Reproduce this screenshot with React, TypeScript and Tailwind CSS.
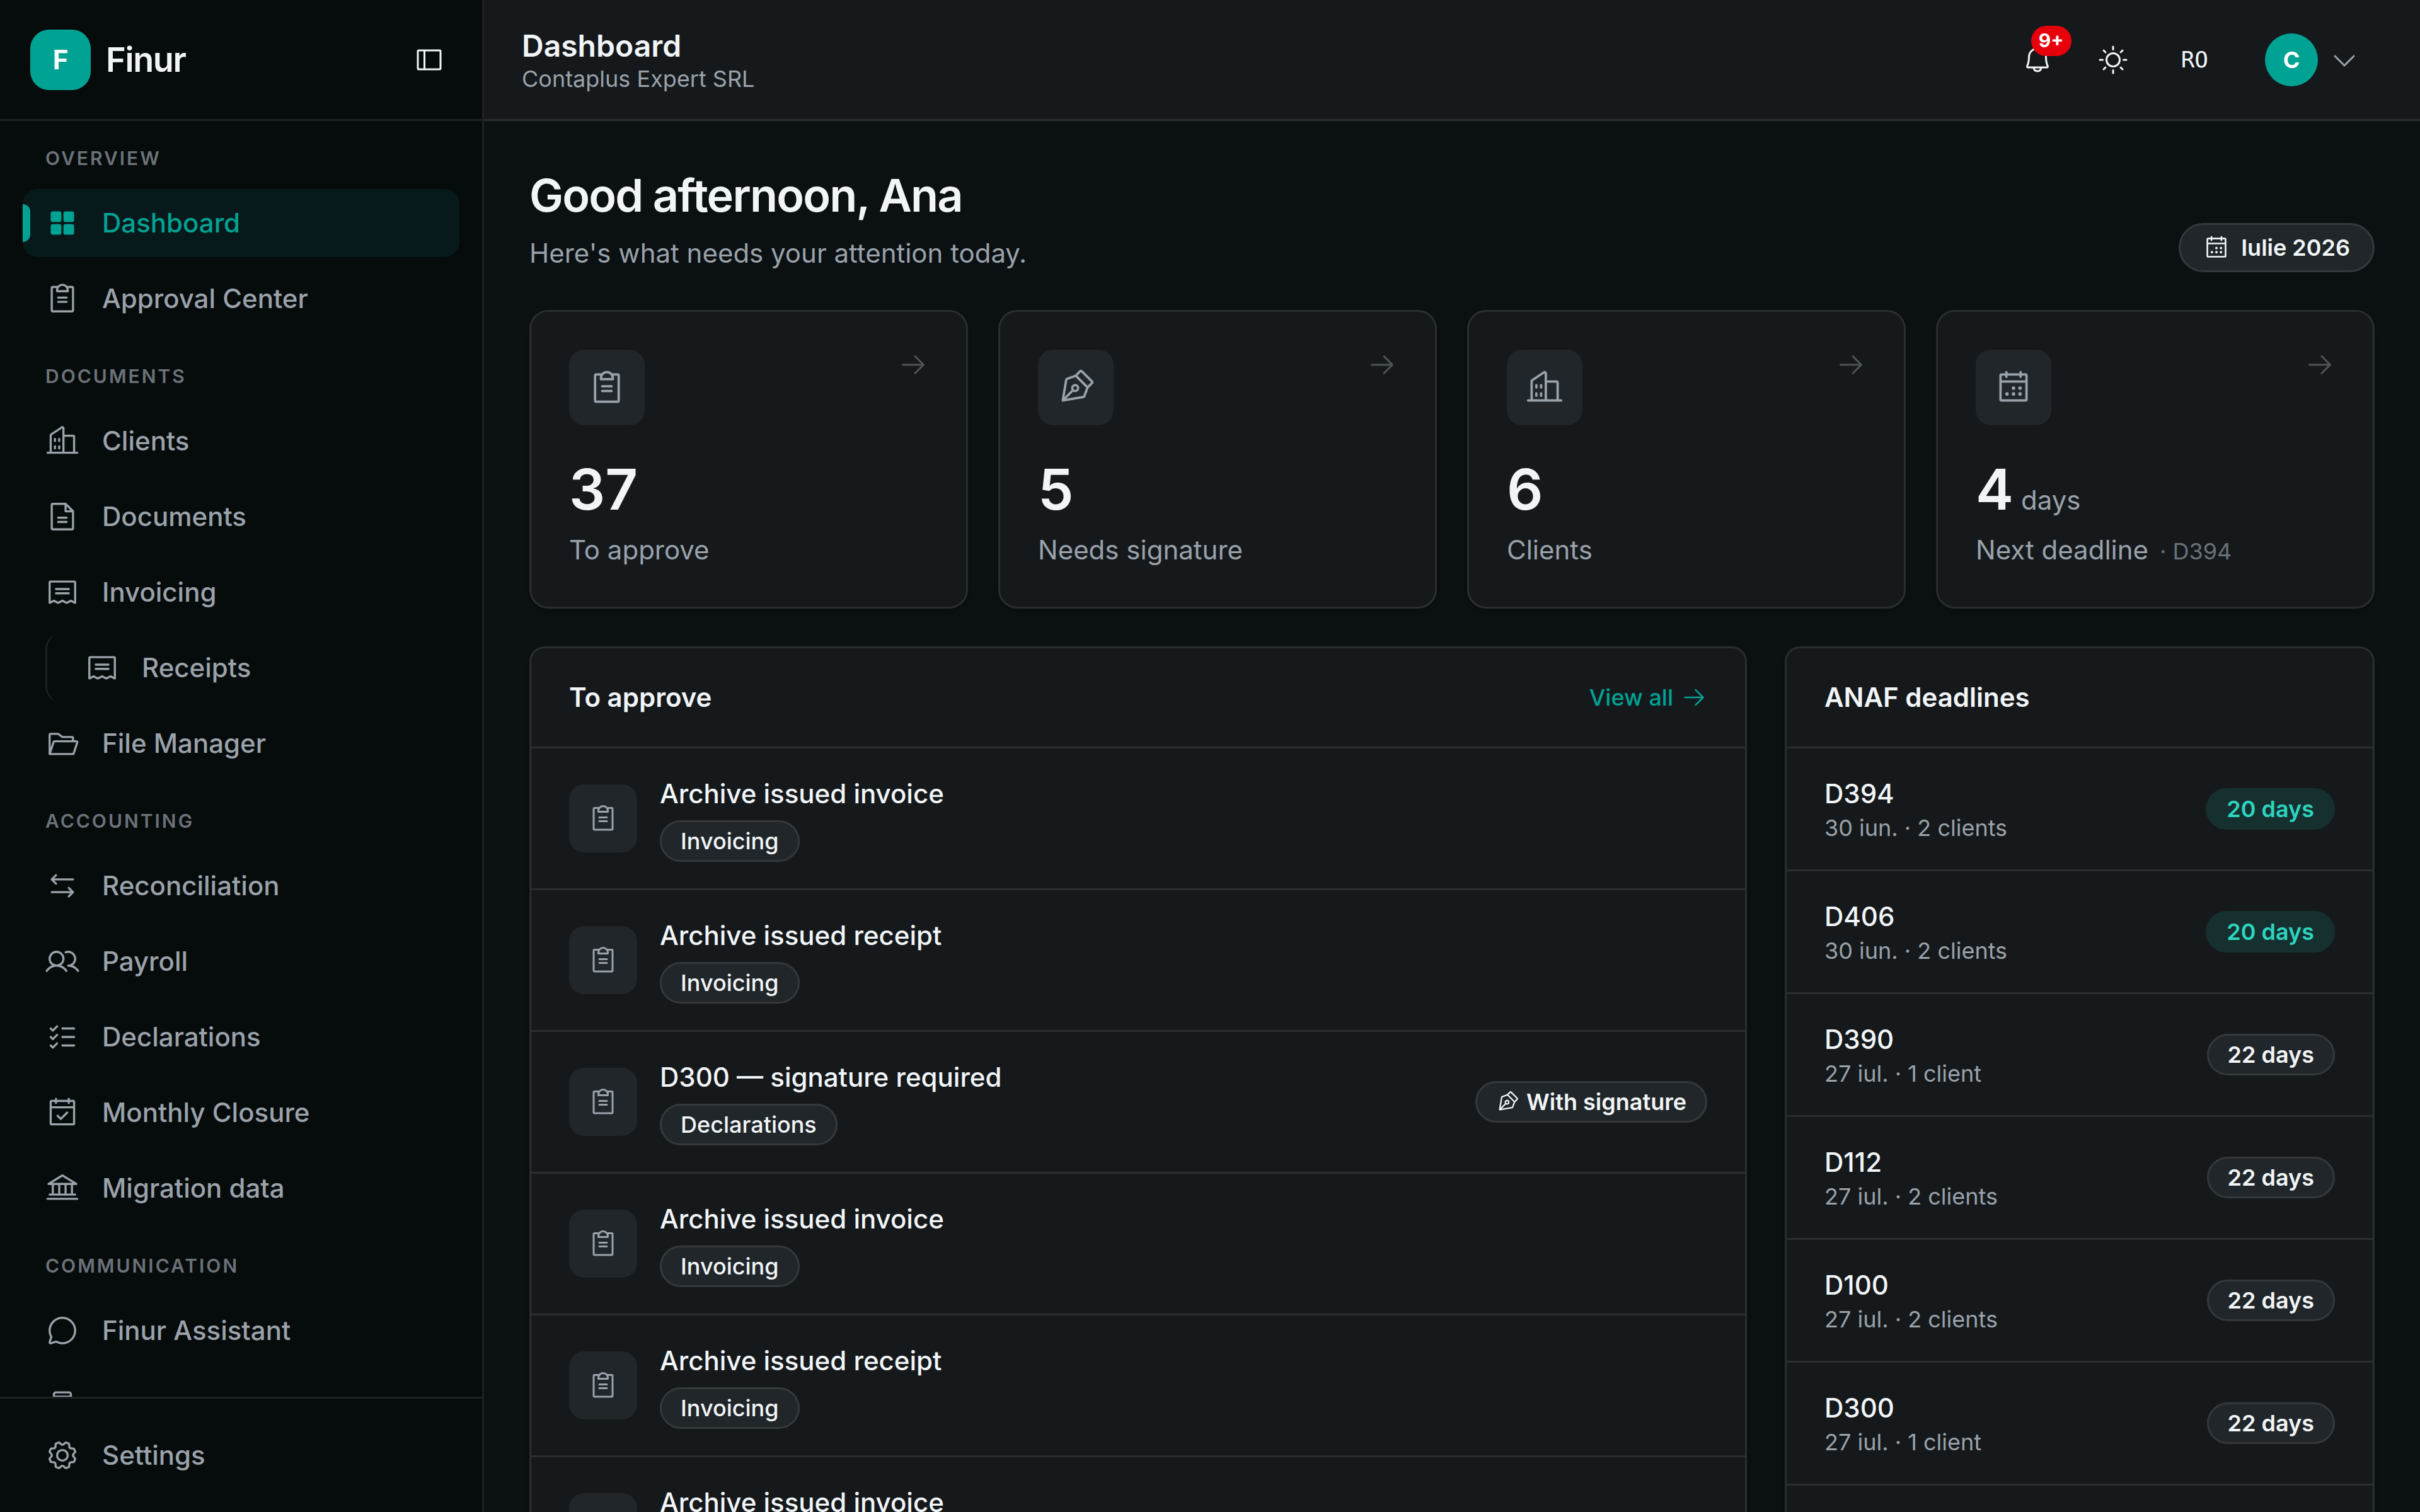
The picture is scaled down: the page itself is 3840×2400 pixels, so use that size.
import { ReactNode } from 'react';
import type { IconType } from 'react-icons';
import {
  PiArrowRight,
  PiArrowsLeftRight,
  PiBank,
  PiBell,
  PiBuildings,
  PiCalendarCheck,
  PiCalendarDots,
  PiCaretDown,
  PiChatCircle,
  PiClipboardText,
  PiDeviceMobile,
  PiFileText,
  PiFolderOpen,
  PiGear,
  PiListChecks,
  PiPenNib,
  PiReceipt,
  PiSidebarSimple,
  PiSquaresFourFill,
  PiSun,
  PiUsers,
} from 'react-icons/pi';
import clsx from 'clsx';

interface NavEntry {
  label: string;
  icon: IconType;
  active?: boolean;
  nested?: boolean;
  iconOnly?: boolean;
}

interface NavSection {
  title: string;
  items: NavEntry[];
}

const NAV: NavSection[] = [
  {
    title: 'OVERVIEW',
    items: [
      { label: 'Dashboard', icon: PiSquaresFourFill, active: true },
      { label: 'Approval Center', icon: PiClipboardText },
    ],
  },
  {
    title: 'DOCUMENTS',
    items: [
      { label: 'Clients', icon: PiBuildings },
      { label: 'Documents', icon: PiFileText },
      { label: 'Invoicing', icon: PiReceipt },
      { label: 'Receipts', icon: PiReceipt, nested: true },
      { label: 'File Manager', icon: PiFolderOpen },
    ],
  },
  {
    title: 'ACCOUNTING',
    items: [
      { label: 'Reconciliation', icon: PiArrowsLeftRight },
      { label: 'Payroll', icon: PiUsers },
      { label: 'Declarations', icon: PiListChecks },
      { label: 'Monthly Closure', icon: PiCalendarCheck },
      { label: 'Migration data', icon: PiBank },
    ],
  },
  {
    title: 'COMMUNICATION',
    items: [
      { label: 'Finur Assistant', icon: PiChatCircle },
      { label: 'Mobile', icon: PiDeviceMobile, iconOnly: true },
    ],
  },
];

const STATS = [
  { value: '37', label: 'To approve', icon: PiClipboardText },
  { value: '5', label: 'Needs signature', icon: PiPenNib },
  { value: '6', label: 'Clients', icon: PiBuildings },
  { value: '4', unit: 'days', label: 'Next deadline', hint: '· D394', icon: PiCalendarDots },
];

const APPROVALS = [
  { id: 1, title: 'Archive issued invoice', tag: 'Invoicing' },
  { id: 2, title: 'Archive issued receipt', tag: 'Invoicing' },
  { id: 3, title: 'D300 — signature required', tag: 'Declarations', signature: true },
  { id: 4, title: 'Archive issued invoice', tag: 'Invoicing' },
  { id: 5, title: 'Archive issued receipt', tag: 'Invoicing' },
  { id: 6, title: 'Archive issued invoice', tag: 'Invoicing' },
];

const DEADLINES = [
  { code: 'D394', detail: '30 iun. · 2 clients', left: '20 days', accent: true },
  { code: 'D406', detail: '30 iun. · 2 clients', left: '20 days', accent: true },
  { code: 'D390', detail: '27 iul. · 1 client', left: '22 days' },
  { code: 'D112', detail: '27 iul. · 2 clients', left: '22 days' },
  { code: 'D100', detail: '27 iul. · 2 clients', left: '22 days' },
  { code: 'D300', detail: '27 iul. · 1 client', left: '22 days' },
  { code: 'D301', detail: '27 iul. · 1 client', left: '22 days' },
];

function NavItem({ label, icon: Icon, active, nested, iconOnly }: NavEntry) {
  return (
    <a
      href="#"
      aria-label={iconOnly ? label : undefined}
      aria-current={active ? 'page' : undefined}
      className={clsx(
        'relative flex h-[108px] shrink-0 items-center gap-9 rounded-3xl text-[42px] leading-[60px] font-medium',
        active ? 'bg-[#08191b] text-[#00a294]' : 'text-[#9aa2aa]',
        nested ? 'ml-9 border-l-3 border-[#1d2122] pr-9 pl-[60px]' : 'px-9',
      )}
    >
      {active && <span className="absolute top-6 left-0 h-[60px] w-3 rounded-r-full bg-[#00a294]" />}
      <Icon className="size-[54px] shrink-0" />
      {!iconOnly && <span>{label}</span>}
    </a>
  );
}

function Sidebar() {
  return (
    <aside className="flex w-[768px] shrink-0 flex-col border-r-3 border-[#1d2122] bg-[#060b0c]">
      <div className="flex h-48 shrink-0 items-center gap-6 border-b-3 border-[#1d2122] px-12">
        <div className="flex size-24 items-center justify-center rounded-[30px] bg-[#00a294] text-[42px] font-bold text-white">
          F
        </div>
        <span className="flex-1 text-[54px] font-semibold tracking-tight text-[#f1f5f7]">Finur</span>
        <button type="button" aria-label="Toggle sidebar" className="flex size-[72px] items-center justify-center text-[#f1f5f7]">
          <PiSidebarSimple className="size-12" />
        </button>
      </div>

      <nav className="flex min-h-0 flex-1 flex-col gap-[47px] overflow-hidden px-9 pt-[37px]">
        {NAV.map((section) => (
          <div key={section.title} className="shrink-0">
            <h2 className="mb-[27px] px-9 text-[30px] leading-[44px] font-semibold tracking-widest text-[#6b7279]">
              {section.title}
            </h2>
            <div className="flex flex-col gap-3">
              {section.items.map((item) => (
                <NavItem key={item.label} {...item} />
              ))}
            </div>
          </div>
        ))}
      </nav>

      <div className="shrink-0 border-t-3 border-[#1d2122] p-9">
        <NavItem label="Settings" icon={PiGear} />
      </div>
    </aside>
  );
}

function Topbar() {
  return (
    <header className="flex h-48 shrink-0 items-center justify-between border-b-3 border-[#2a2e30] bg-[#15191c] pr-[72px] pl-[60px]">
      <div>
        <h1 className="text-[48px] leading-[60px] font-semibold text-[#f1f5f7]">Dashboard</h1>
        <p className="text-[36px] leading-[44px] text-[#9aa2aa]">Contaplus Expert SRL</p>
      </div>

      <div className="flex items-center text-[#f1f5f7]">
        <button type="button" aria-label="Notifications" className="relative mr-3 flex size-[108px] items-center justify-center">
          <PiBell className="size-12" />
          <span className="absolute top-0 right-0 flex h-12 items-center rounded-full bg-[#e7000b] px-3 text-[30px] font-bold text-white">
            9+
          </span>
        </button>
        <button type="button" aria-label="Toggle theme" className="mr-3 flex size-[108px] items-center justify-center">
          <PiSun className="size-12" />
        </button>
        <button
          type="button"
          className="mr-3 h-[108px] px-[42px] font-['DejaVu_Sans_Mono',monospace] text-[36px] font-medium"
        >
          RO
        </button>
        <button type="button" aria-label="Account menu" className="flex h-[108px] items-center gap-[18px] pr-6 pl-9">
          <span className="flex size-[84px] items-center justify-center rounded-full bg-[#00a294] text-[36px] font-bold text-white">
            C
          </span>
          <PiCaretDown className="size-12 text-[#9aa2aa]" />
        </button>
      </div>
    </header>
  );
}

function Badge({ children, accent, strong }: { children: ReactNode; accent?: boolean; strong?: boolean }) {
  return (
    <span
      className={clsx(
        'inline-flex h-[66px] w-fit items-center gap-3 rounded-full border-3 px-[30px] text-[36px] leading-12',
        strong ? 'font-semibold' : 'font-medium',
        accent ? 'border-[#16302f] bg-[#16302f] text-[#2dd4bf]' : 'border-[#34393c] bg-[#21262a] text-[#f1f5f7]',
      )}
    >
      {children}
    </span>
  );
}

function Panel({ title, action, children }: { title: string; action?: ReactNode; children: ReactNode }) {
  return (
    <section className="rounded-3xl border-3 border-[#2a2e30] bg-[#15191c] shadow-md">
      <div className="flex items-center justify-between border-b-3 border-[#2a2e30] px-[60px] py-12">
        <h3 className="text-[42px] leading-[60px] font-semibold text-[#f1f5f7]">{title}</h3>
        {action}
      </div>
      <ul className="divide-y-3 divide-[#2a2e30]">{children}</ul>
    </section>
  );
}

export default function App() {
  return (
    <div className="flex h-screen overflow-hidden bg-[#0b1012] font-['Inter',sans-serif] antialiased">
      <Sidebar />
      <div className="flex min-w-0 flex-1 flex-col">
        <Topbar />
        <main className="min-h-0 flex-1 overflow-hidden p-[72px]">
          <div className="flex items-end justify-between">
            <div>
              <h2 className="text-[72px] leading-[92px] font-semibold tracking-tight text-[#f1f5f7]">Good afternoon, Ana</h2>
              <p className="mt-4 text-[42px] leading-[60px] text-[#9aa2aa]">Here's what needs your attention today.</p>
            </div>
            <div className="flex h-[78px] items-center gap-[18px] rounded-full border-3 border-[#34393c] bg-[#21262a] px-9 text-[36px] leading-12 font-semibold text-[#f1f5f7]">
              <PiCalendarDots className="size-[42px]" />
              Iulie 2026
            </div>
          </div>

          <div className="mt-[60px] grid grid-cols-4 gap-12">
            {STATS.map((stat) => (
              <a
                key={stat.label}
                href="#"
                className="rounded-[30px] border-3 border-[#2a2e30] bg-[#15191c] p-[60px] shadow-md"
              >
                <div className="flex items-start justify-between">
                  <div className="flex size-[120px] items-center justify-center rounded-3xl bg-[#21262a] text-[#9aa2aa]">
                    <stat.icon className="size-[60px]" />
                  </div>
                  <PiArrowRight className="size-12 text-[#4e5457]" />
                </div>
                <div className="mt-12 flex items-baseline gap-3 text-[90px] leading-[108px] font-semibold text-[#f1f5f7]">
                  {stat.value}
                  {stat.unit && <span className="text-[42px] leading-[60px] font-normal text-[#9aa2aa]">{stat.unit}</span>}
                </div>
                <div className="mt-3 flex items-baseline gap-[18px] text-[42px] leading-[60px] text-[#9aa2aa]">
                  {stat.label}
                  {stat.hint && <span className="text-[36px] leading-12 text-[#6b7279]">{stat.hint}</span>}
                </div>
              </a>
            ))}
          </div>

          <div className="mt-[60px] grid grid-cols-[1fr_936px] items-start gap-[60px]">
            <Panel
              title="To approve"
              action={
                <a href="#" className="flex items-center gap-3 text-[36px] leading-12 font-medium text-[#00a294]">
                  View all
                  <PiArrowRight className="size-[42px]" />
                </a>
              }
            >
              {APPROVALS.map((item) => (
                <li key={item.id} className="flex items-center gap-9 px-[60px] py-[42px]">
                  <div className="flex size-[108px] items-center justify-center rounded-3xl bg-[#21262a] text-[#9aa2aa]">
                    <PiClipboardText className="size-12" />
                  </div>
                  <div className="flex flex-1 flex-col gap-3">
                    <p className="text-[42px] leading-[60px] font-medium text-[#f1f5f7]">{item.title}</p>
                    <Badge>{item.tag}</Badge>
                  </div>
                  {item.signature && (
                    <Badge strong>
                      <PiPenNib className="size-9" />
                      With signature
                    </Badge>
                  )}
                </li>
              ))}
            </Panel>

            <Panel title="ANAF deadlines">
              {DEADLINES.map((item) => (
                <li key={item.code} className="flex items-center justify-between px-[60px] py-[42px]">
                  <div>
                    <p className="text-[42px] leading-[60px] font-medium text-[#f1f5f7]">{item.code}</p>
                    <p className="text-[36px] leading-12 text-[#9aa2aa]">{item.detail}</p>
                  </div>
                  <Badge strong accent={item.accent}>
                    {item.left}
                  </Badge>
                </li>
              ))}
            </Panel>
          </div>
        </main>
      </div>
    </div>
  );
}
